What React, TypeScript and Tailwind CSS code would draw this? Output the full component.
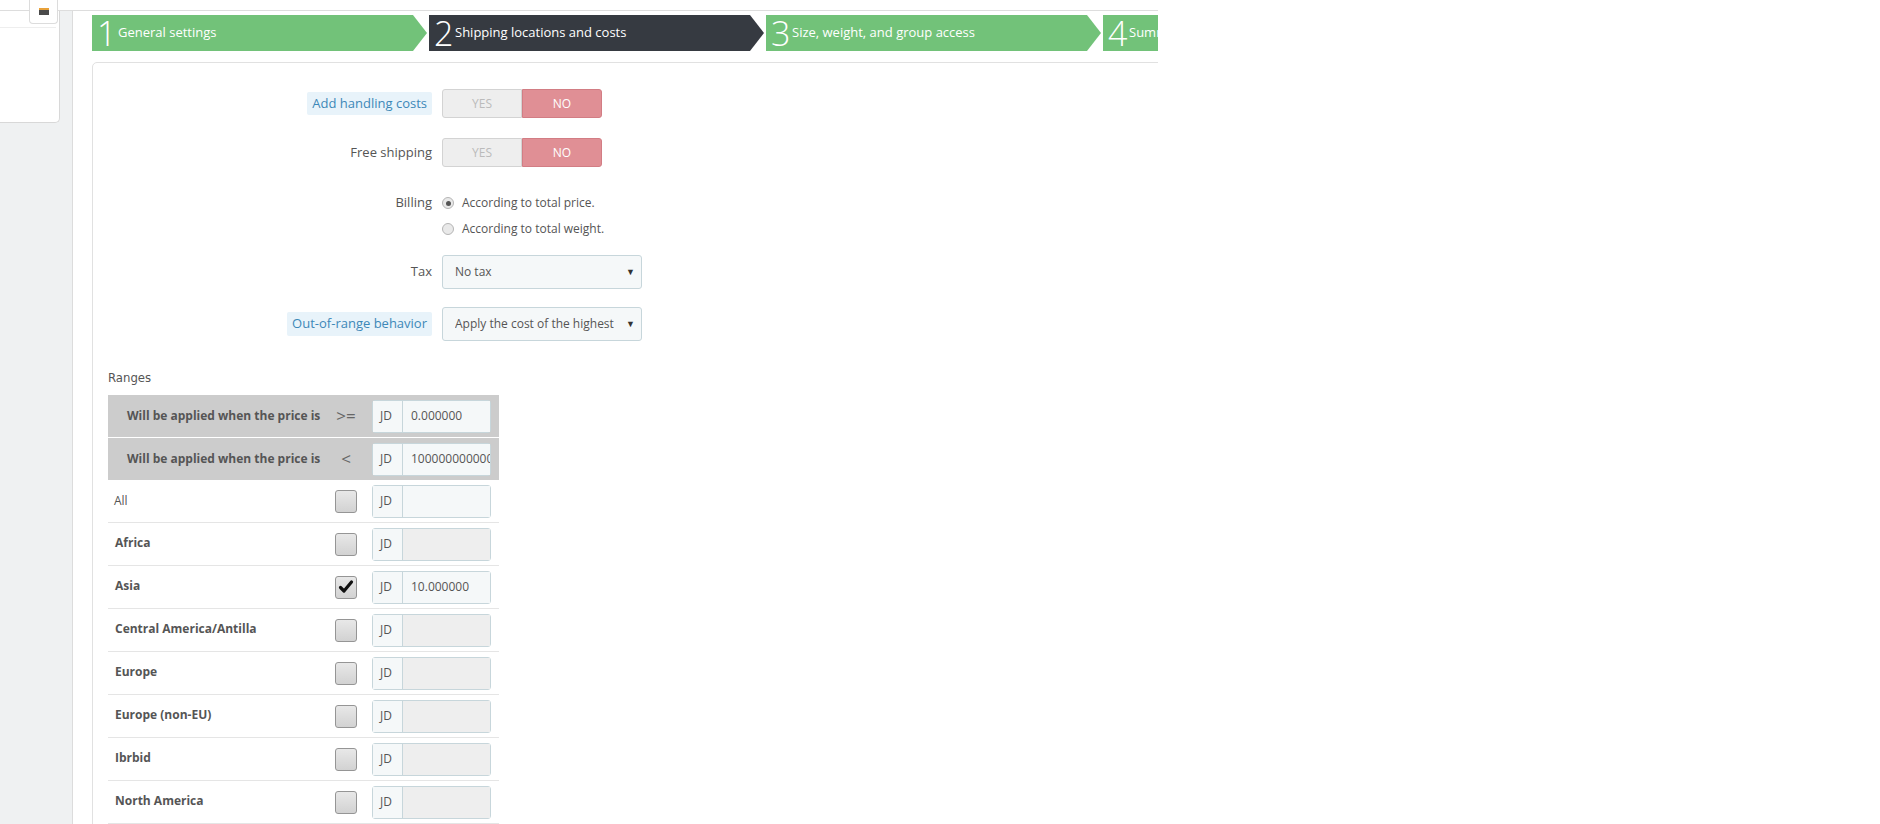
const font = "font-['Open_Sans',sans-serif]";

const steps = [
	{ n: "1", label: "General settings", active: false },
	{ n: "2", label: "Shipping locations and costs", active: true },
	{ n: "3", label: "Size, weight, and group access", active: false },
	{ n: "4", label: "Summary", active: false },
];

const zones = [
	{ name: "Africa", checked: false, value: "" },
	{ name: "Asia", checked: true, value: "10.000000" },
	{ name: "Central America/Antilla", checked: false, value: "" },
	{ name: "Europe", checked: false, value: "" },
	{ name: "Europe (non-EU)", checked: false, value: "" },
	{ name: "Ibrbid", checked: false, value: "" },
	{ name: "North America", checked: false, value: "" },
];

function Switch() {
	return (
		<div className="flex h-[29px] w-[160px] text-[12px]">
			<div className="flex w-1/2 items-center justify-center rounded-l-[3px] border border-[#d3d3d3] bg-[#eeeeee] text-[#bbbbbb]">
				YES
			</div>
			<div className="flex w-1/2 items-center justify-center rounded-r-[3px] border border-[#d27d84] bg-[#e08f95] text-white">
				NO
			</div>
		</div>
	);
}

function Select({ value }: { value: string }) {
	return (
		<div className="flex h-[34px] w-[200px] items-center justify-between rounded-[3px] border border-[#c7d6db] bg-[#f5f8f9] pl-[12px] pr-[6px] text-[12px] text-[#555]">
			<span className="w-[159px] overflow-hidden whitespace-nowrap">{value}</span>
			<span className="text-[9px] text-[#333]">▼</span>
		</div>
	);
}

function Radio({ checked, label }: { checked?: boolean; label: string }) {
	return (
		<div className="flex h-[20px] items-center">
			<div className="flex h-[12px] w-[12px] items-center justify-center rounded-full border border-[#b5b5b5] bg-[#e9e9e9]">
				{checked && <div className="h-[5px] w-[5px] rounded-full bg-[#555]" />}
			</div>
			<span className="ml-[8px] text-[12px] text-[#555]">{label}</span>
		</div>
	);
}

function FormLabel({ text, tip }: { text: string; tip?: boolean }) {
	return (
		<div className="flex w-[324px] justify-end">
			{tip ? (
				<span className="rounded-[2px] bg-[#e8f3fa] px-[5px] py-[2px] text-[13px] text-[#3d88b8]">
					{text}
				</span>
			) : (
				<span className="text-[13px] text-[#555]">{text}</span>
			)}
		</div>
	);
}

function Checkbox({ checked }: { checked: boolean }) {
	return (
		<div className="flex h-[23px] w-[22px] items-center justify-center rounded-[3px] border border-[#959595] bg-gradient-to-b from-[#e8e8e8] to-[#d2d2d2]">
			{checked && (
				<svg width="16" height="16" viewBox="0 0 16 16">
					<path d="M2.5 8.5 L6 12 L13.5 3" fill="none" stroke="#111" strokeWidth="3.2" strokeLinecap="round" strokeLinejoin="round" />
				</svg>
			)}
		</div>
	);
}

function PriceInput({ value, disabled }: { value: string; disabled?: boolean }) {
	return (
		<div className="flex h-[33px] w-[119px] rounded-[3px] border border-[#c7d6db] text-[12px] font-normal text-[#555]">
			<div className="flex w-[30px] shrink-0 items-center border-r border-[#c7d6db] bg-[#f5f8f9] pl-[7px]">
				JD
			</div>
			<div
				className={`flex flex-1 items-center overflow-hidden whitespace-nowrap pl-[8px] ${disabled ? "bg-[#eeeeee]" : "bg-[#f5f8f9]"}`}
			>
				{value}
			</div>
		</div>
	);
}

export default function App() {
	return (
		<div className={`${font} h-[824px] w-[1880px] bg-white`}>
			<div className="relative h-[824px] w-[1158px] overflow-hidden pt-[10px]">
				<div className="absolute left-[29px] top-0 z-10 flex h-[24px] w-[29px] items-end justify-center rounded-b-[4px] border border-t-0 border-[#dcdcdc] bg-white pb-[8px]">
					<div className="h-[7px] w-[10px] border-t-2 border-t-[#e8a13a] bg-[#4a4a4a]" />
				</div>
				<div className="flex h-full border-t border-[#dddddd]">
					<div className="w-[73px] shrink-0 border-r border-[#dcdcdc] bg-[#eff1f2]">
						<div className="h-[112px] w-[60px] rounded-br-[5px] border-b border-r border-[#d8d8d8] bg-white">
							<div className="h-[17px] w-[56px] border-b border-[#eeeeee]" />
						</div>
					</div>
					<div className="min-w-0 flex-1 pl-[19px] pt-[4px]">
						<div className="flex gap-[2px]">
							{steps.map((s) => (
								<div
									key={s.n}
									className={`flex h-[36px] w-[335px] shrink-0 items-center pl-[5px] text-white [clip-path:polygon(0_0,calc(100%_-_14px)_0,100%_50%,calc(100%_-_14px)_100%,0_100%)] ${s.active ? "bg-[#363a41]" : "bg-[#72c279]"}`}
								>
									<span className="w-[17px] text-[34px] font-light leading-none">{s.n}</span>
									<span className="ml-[4px] whitespace-nowrap text-[13px]">{s.label}</span>
								</div>
							))}
						</div>
						<div className="mt-[11px] h-[800px] w-[1120px] rounded-[5px] border border-[#e1e1e1] px-[15px] pt-[26px]">
							<div className="flex items-center">
								<FormLabel text="Add handling costs" tip />
								<div className="ml-[10px]">
									<Switch />
								</div>
							</div>
							<div className="mt-[20px] flex items-center">
								<FormLabel text="Free shipping" />
								<div className="ml-[10px]">
									<Switch />
								</div>
							</div>
							<div className="mt-[26px] flex">
								<div className="flex h-[20px] w-[324px] items-center justify-end text-[13px] text-[#555]">
									Billing
								</div>
								<div className="ml-[10px] flex flex-col gap-[6px]">
									<Radio checked label="According to total price." />
									<Radio label="According to total weight." />
								</div>
							</div>
							<div className="mt-[16px] flex items-center">
								<FormLabel text="Tax" />
								<div className="ml-[10px]">
									<Select value="No tax" />
								</div>
							</div>
							<div className="mt-[18px] flex items-center">
								<FormLabel text="Out-of-range behavior" tip />
								<div className="ml-[10px]">
									<Select value="Apply the cost of the highest defined range" />
								</div>
							</div>
							<div className="mt-[29px] h-[16px] font-['DejaVu_Sans_Condensed',sans-serif] text-[13px] leading-[16px] text-[#555]">
								Ranges
							</div>
							<div className="mt-[9px] w-[391px]">
								<div className="flex h-[42px] items-center bg-[#cccccc] text-[12px] font-bold text-[#555]">
									<div className="w-[222px] pl-[19px]">Will be applied when the price is</div>
									<div className="w-[32px] text-center text-[17px] font-normal text-[#666]">&gt;=</div>
									<div className="pl-[10px]">
										<PriceInput value="0.000000" />
									</div>
								</div>
								<div className="mt-px flex h-[42px] items-center bg-[#cccccc] text-[12px] font-bold text-[#555]">
									<div className="w-[222px] pl-[19px]">Will be applied when the price is</div>
									<div className="w-[32px] text-center text-[17px] font-normal text-[#666]">&lt;</div>
									<div className="pl-[10px]">
										<PriceInput value="100000000000000" />
									</div>
								</div>
								<div className="flex h-[43px] items-center border-b border-[#e5e5e5] text-[12px] text-[#555]">
									<div className="w-[222px] pl-[6px]">All</div>
									<div className="flex w-[32px] justify-center">
										<Checkbox checked={false} />
									</div>
									<div className="pl-[10px]">
										<PriceInput value="" />
									</div>
								</div>
								{zones.map((z) => (
									<div
										key={z.name}
										className="flex h-[43px] items-center border-b border-[#e5e5e5] text-[12px] text-[#555]"
									>
										<div className="w-[222px] pb-[3px] pl-[7px] font-bold">{z.name}</div>
										<div className="flex w-[32px] justify-center">
											<Checkbox checked={z.checked} />
										</div>
										<div className="pl-[10px]">
											<PriceInput value={z.value} disabled={!z.checked} />
										</div>
									</div>
								))}
							</div>
						</div>
					</div>
				</div>
			</div>
		</div>
	);
}
